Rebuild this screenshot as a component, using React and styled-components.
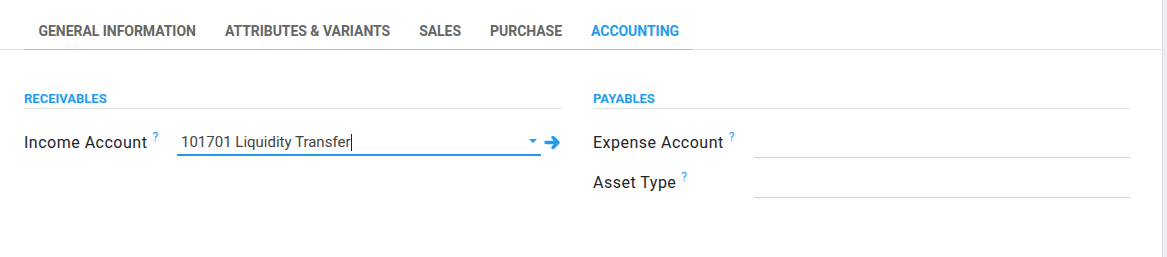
import React from "react";
import styled, { createGlobalStyle } from "styled-components";

const Global = createGlobalStyle`
  html, body { margin: 0; padding: 0; background: #fff; }
  body { font-family: Roboto, "Noto Sans", Arial, sans-serif; }
  * { box-sizing: border-box; }
`;

const BLUE = "#1f9cf0";

const Page = styled.div`
  display: flex;
  min-height: 100vh;
`;

const Sheet = styled.div`
  flex: 1;
  background: #fff;
  border-right: 1px solid #dcdfe3;
`;

const Gutter = styled.div`
  width: 4px;
  background: #eceef1;
`;

const TabHeader = styled.div`
  border-bottom: 1px solid #e3e3e3;
  height: 50px;
`;

const TabList = styled.div`
  display: inline-flex;
  margin-left: 24px;
  height: 50px;
  border-bottom: 1px solid #bdbdbd;
`;

const Tab = styled.div`
  padding: 21px 14.5px 0;
  line-height: 20px;
  font-size: 14px;
  letter-spacing: -0.04px;
  font-weight: 700;
  text-transform: uppercase;
  color: ${(p) => (p.$active ? BLUE : "#666")};
`;

const Content = styled.div`
  display: grid;
  grid-template-columns: 1fr 1fr;
  column-gap: 32px;
  padding: 40px 32px 0 24px;
`;

const Group = styled.div`
  display: flex;
  flex-direction: column;
`;

const Separator = styled.div`
  font-size: 13px;
  font-weight: 700;
  line-height: 17px;
  color: ${BLUE};
  text-transform: uppercase;
  padding-bottom: 1px;
  border-bottom: 1px solid #e2e2e2;
  margin-bottom: 13px;
`;

const Row = styled.div`
  display: grid;
  grid-template-columns: ${(p) => p.$labelWidth}px 1fr;
  align-items: center;
  height: 40px;
`;

const Label = styled.div`
  font-size: 16px;
  letter-spacing: 0.5px;
  color: #212529;
  white-space: nowrap;
`;

const Help = styled.sup`
  color: ${BLUE};
  font-size: 12px;
  margin-left: 5px;
  position: relative;
  top: -1px;
`;

const FieldWrap = styled.div`
  display: flex;
  align-items: center;
  height: 30px;
`;

const Input = styled.div`
  flex: 1;
  height: ${(p) => (p.$focused ? 29 : 31)}px;
  display: flex;
  align-items: center;
  padding: 4px 0 0 4px;
  font-size: 15px;
  color: #444;
  border-bottom: ${(p) => (p.$focused ? `2px solid ${BLUE}` : "1px solid #cfcfcf")};
  margin-top: ${(p) => (p.$focused ? -2 : 1)}px;
`;

const Cursor = styled.span`
  display: inline-block;
  width: 1px;
  height: 17px;
  background: #222;
  margin-left: 1px;
`;

const Spacer = styled.span`
  flex: 1;
`;

const Caret = styled.span`
  width: 0;
  height: 0;
  border-left: 4px solid transparent;
  border-right: 4px solid transparent;
  border-top: 4px solid ${BLUE};
  margin-right: 4px;
  margin-top: -2px;
`;

const ArrowBtn = styled.span`
  display: flex;
  align-items: center;
  width: 20px;
  padding-left: 3px;
  margin-top: 1px;
`;

function Arrow() {
  return (
    <svg width="17" height="17" viewBox="0 0 17 17">
      <path
        d="M2 8.5 H14 M9 3.5 L14 8.5 L9 13.5"
        fill="none"
        stroke={BLUE}
        strokeWidth="3.4"
        strokeLinecap="round"
        strokeLinejoin="round"
      />
    </svg>
  );
}

const tabs = [
  "General Information",
  "Attributes & Variants",
  "Sales",
  "Purchase",
  "Accounting",
];

export default function App() {
  return (
    <>
      <Global />
      <Page>
        <Sheet>
          <TabHeader>
            <TabList>
              {tabs.map((t) => (
                <Tab key={t} $active={t === "Accounting"}>
                  {t}
                </Tab>
              ))}
            </TabList>
          </TabHeader>
          <Content>
            <Group>
              <Separator>Receivables</Separator>
              <Row $labelWidth={153}>
                <Label>
                  Income Account<Help>?</Help>
                </Label>
                <FieldWrap>
                  <Input $focused>
                    101701 Liquidity Transfer
                    <Cursor />
                    <Spacer />
                    <Caret />
                  </Input>
                  <ArrowBtn>
                    <Arrow />
                  </ArrowBtn>
                </FieldWrap>
              </Row>
            </Group>
            <Group>
              <Separator>Payables</Separator>
              <Row $labelWidth={161}>
                <Label>
                  Expense Account<Help>?</Help>
                </Label>
                <FieldWrap>
                  <Input />
                </FieldWrap>
              </Row>
              <Row $labelWidth={161}>
                <Label>
                  Asset Type<Help>?</Help>
                </Label>
                <FieldWrap>
                  <Input />
                </FieldWrap>
              </Row>
            </Group>
          </Content>
        </Sheet>
        <Gutter />
      </Page>
    </>
  );
}
